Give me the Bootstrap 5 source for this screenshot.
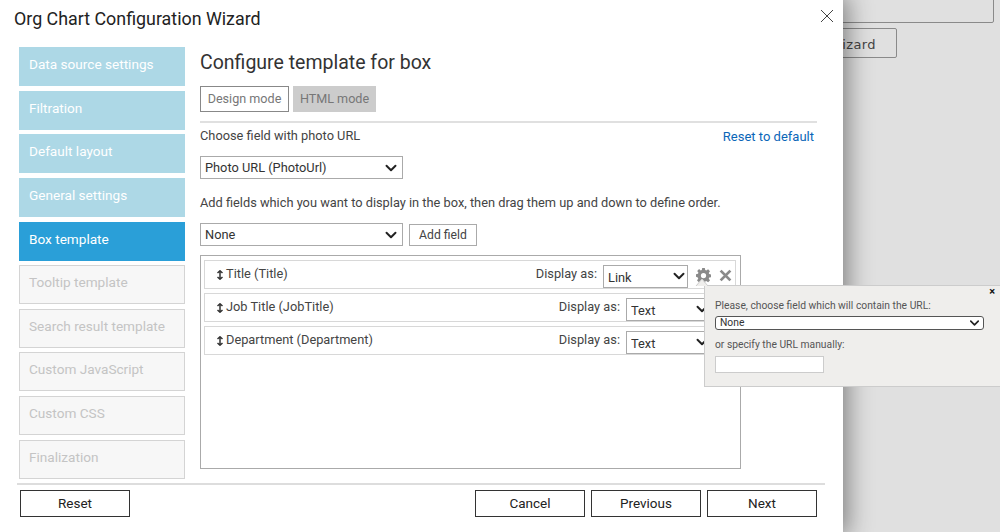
<!DOCTYPE html>
<html lang="en">
<head>
<meta charset="utf-8">
<title>Org Chart Configuration Wizard</title>
<link href="https://cdn.jsdelivr.net/npm/bootstrap@5.3.0/dist/css/bootstrap.min.css" rel="stylesheet">
<style>
html,body{height:532px;overflow:hidden}
body{background:#e0e0e0;font-family:Roboto,"Noto Sans",sans-serif;font-size:13px;color:#444}
.backdrop-page{position:absolute;inset:0}
.back-input{position:absolute;left:700px;top:-10px;width:294px;height:33px;border:1px solid #8a8a8a;border-radius:2px}
.back-btn{position:absolute;left:760px;top:28px;width:137px;height:30px;border:1px solid #8a8a8a;border-radius:2px;text-align:right;padding:6px 20px 0 0;font-family:"DejaVu Sans",sans-serif;font-size:13px;letter-spacing:.4px;color:#444}
.wizard{position:relative;width:843px;height:532px;background:#fff;box-shadow:0 0 24px 4px rgba(0,0,0,.45)}
.wiz-title{font-size:17.85px;color:#222;padding:8px 0 0 14px;height:47px;line-height:22px}
.wiz-close{position:absolute;left:820px;top:9px;width:14px;height:14px}
.wiz-body{padding-left:19px;height:436px;gap:15px}
.steps{width:166px;flex:none}
.step{height:39px;margin-bottom:4.65px;padding:0 10px;line-height:34px;font-size:13.6px;color:#fff;background:#add8e6;white-space:nowrap}
.step.now{background:#2a9fd8}
.step.off{background:#f7f7f7;border:1px solid #d4d4d4;color:#c4c4c4;line-height:32px;padding:0 9px}
.main-col{width:617px;flex:none;position:relative}
.main-h{font-size:19.5px;font-weight:400;color:#333;margin:2px 0 0;height:37px;line-height:27px}
.mode{height:26px;font-size:12.6px;line-height:24px;padding:0;width:89px;color:#777;border:1px solid #888;background:#fff;border-radius:0}
.mode.alt{background:#ccc;border-color:#ccc;color:#777;width:83px;margin-left:4px;text-align:center}
.rule{height:2px;background:#e0e0e0;margin:9px 0 0}
.lab{font-size:12.8px;color:#444;line-height:18px}
.lab-top{margin-top:4px}
.reset-link{color:#0a66b8;text-decoration:none;font-size:13px;margin-right:3px;position:relative;top:1px}
.sel{font-family:inherit;font-size:12.8px;color:#333;height:23px;padding:0 24px 0 4px;border:1px solid #aaa;border-radius:0;line-height:21px;box-shadow:none;
background-size:16px 12px;background-position:right 3px center;
background-image:url("data:image/svg+xml,%3csvg xmlns='http://www.w3.org/2000/svg' viewBox='0 0 16 16'%3e%3cpath fill='none' stroke='%23222' stroke-linecap='round' stroke-linejoin='round' stroke-width='2.6' d='m2 5 6 6 6-6'/%3e%3c/svg%3e")}
.sel-w{width:203px}
.sel-a{margin-top:11px}
.lab-b{margin-top:15px}
.add-row{margin-top:11px}
.add-btn{height:22px;width:68px;font-size:12.2px;line-height:20px;padding:0;color:#444;border:1px solid #aaa;border-radius:0;background:#fff;margin-left:6px;margin-top:1px}
.field-box{width:541px;height:214px;border:1px solid #aaa;padding:4px 4px 0 3px;margin-top:9px}
.field-row{height:29px;border:1px solid #d8d8d8;margin-bottom:4px;padding:0 24px 2px 9px;font-size:12.8px;color:#444}
.field-row.first{padding-right:3px}
.grip{width:12px;flex:none;margin-top:3px}
.field-row .sel{width:85px;height:23px;color:#333;margin:5px 0 0 6px;background-position:right 0 center;padding-top:1px}
.gear-x{margin:4px 0 0 8px;gap:8px;flex:none}
.wiz-foot{border-top:2px solid #ddd;margin:0 18px 0 17px;padding:5px 8px 0 3px;height:48px}
.foot-btn{width:110px;height:27px;padding:0;line-height:25px;font-size:13.5px;color:#222;background:#fff;border:1px solid #333;border-radius:0}
.foot-gap{margin-left:6px}
.pop{position:absolute;left:704px;top:285px;width:297px;height:102px;background:#efeeec;border:1px solid #ccc;padding:12px 10px;font-size:10.3px;color:#555;z-index:5}
.pop-x{position:absolute;right:5px;top:-1px;font-size:11px;font-weight:700;color:#111;line-height:14px}
.pop .sel{display:block;width:269px;height:14px;font-size:10.3px;line-height:12px;border:1px solid #555;border-radius:3px;background-size:13px 10px;padding:0 16px 0 4px;margin:3px 0 7px;background-position:right 2px center;color:#333}
.pop-in{display:block;width:109px;height:17px;background:#fff;border:1px solid #ccc;margin-top:3px}
.pop-arrow{position:absolute;left:694px;top:278px;z-index:6;width:16px;height:8px}
</style>
</head>
<body>
<div class="backdrop-page" aria-hidden="true">
  <div class="back-input"></div>
  <div class="back-btn">Wizard</div>
</div>
<div class="wizard">
  <div class="wiz-title">Org Chart Configuration Wizard</div>
  <svg class="wiz-close" viewBox="0 0 14 14"><path d="M1 1l12 12M13 1L1 13" fill="none" stroke="#444" stroke-width="1"/></svg>
  <div class="d-flex wiz-body">
    <div class="steps">
      <div class="step">Data source settings</div>
      <div class="step">Filtration</div>
      <div class="step">Default layout</div>
      <div class="step">General settings</div>
      <div class="step now">Box template</div>
      <div class="step off">Tooltip template</div>
      <div class="step off">Search result template</div>
      <div class="step off">Custom JavaScript</div>
      <div class="step off">Custom CSS</div>
      <div class="step off">Finalization</div>
    </div>
    <div class="main-col">
      <h1 class="main-h">Configure template for box</h1>
      <div class="d-flex">
        <button class="btn mode" type="button">Design mode</button>
        <button class="btn mode alt" type="button">HTML mode</button>
      </div>
      <div class="rule"></div>
      <div class="d-flex justify-content-between lab lab-top">
        <span>Choose field with photo URL</span>
        <a class="reset-link" href="#">Reset to default</a>
      </div>
      <select class="form-select sel sel-w sel-a"><option>Photo URL (PhotoUrl)</option></select>
      <div class="lab lab-b">Add fields which you want to display in the box, then drag them up and down to define order.</div>
      <div class="d-flex add-row">
        <select class="form-select sel sel-w"><option>None</option></select>
        <button class="btn add-btn" type="button">Add field</button>
      </div>
      <div class="field-box">
        <div class="field-row first d-flex align-items-center">
          <svg class="grip" width="7" height="10" viewBox="0 0 8 10"><path d="M4 1v8M1.500 3 4 .8 6.500 3M1.500 7 4 9.200 6.500 7" fill="none" stroke="#333" stroke-width="1.500"/></svg><span>Title (Title)</span>
          <span class="ms-auto">Display as:</span>
          <select class="form-select sel"><option>Link</option></select>
          <span class="d-flex align-items-center gear-x">
            <svg width="15" height="15" viewBox="0 0 16 16"><path fill="#8a8a8a" fill-rule="evenodd" d="M6.600 0h2.800l.4 2.200 1.200.5L12.900 1.400l2 2-1.300 1.900.5 1.200 2.200.4v2.800l-2.200.4-.5 1.200 1.300 1.900-2 2-1.900-1.300-1.200.5-.4 2.200H6.600l-.4-2.200-1.200-.5-1.900 1.300-2-2 1.300-1.900-.5-1.200L-.1 9.400V6.600l2.200-.4.5-1.200L1.300 3.100l2-2L5 2.700l1.200-.5zM8 5.200a2.800 2.800 0 1 0 0 5.600 2.800 2.800 0 0 0 0-5.600z"/></svg>
            <svg width="13" height="13" viewBox="0 0 12 12"><path d="M1.500 1.500l9 9M10.500 1.500l-9 9" stroke="#8a8a8a" stroke-width="2.600" fill="none"/></svg>
          </span>
        </div>
        <div class="field-row d-flex align-items-center">
          <svg class="grip" width="7" height="10" viewBox="0 0 8 10"><path d="M4 1v8M1.500 3 4 .8 6.500 3M1.500 7 4 9.200 6.500 7" fill="none" stroke="#333" stroke-width="1.500"/></svg><span>Job Title (JobTitle)</span>
          <span class="ms-auto">Display as:</span>
          <select class="form-select sel"><option>Text</option></select>
        </div>
        <div class="field-row d-flex align-items-center">
          <svg class="grip" width="7" height="10" viewBox="0 0 8 10"><path d="M4 1v8M1.500 3 4 .8 6.500 3M1.500 7 4 9.200 6.500 7" fill="none" stroke="#333" stroke-width="1.500"/></svg><span>Department (Department)</span>
          <span class="ms-auto">Display as:</span>
          <select class="form-select sel"><option>Text</option></select>
        </div>
      </div>
    </div>
  </div>
  <div class="wiz-foot d-flex">
    <button class="btn foot-btn" type="button">Reset</button>
    <div class="ms-auto d-flex">
      <button class="btn foot-btn" type="button">Cancel</button>
      <button class="btn foot-btn foot-gap" type="button">Previous</button>
      <button class="btn foot-btn foot-gap" type="button">Next</button>
    </div>
  </div>
</div>
<svg class="pop-arrow" viewBox="0 0 16 8"><path d="M2 8 8 1l6 7z" fill="#efeeec"/><path d="M2 8 8 1l6 7" fill="none" stroke="#ccc"/></svg>
<div class="pop">
  <span class="pop-x">×</span>
  <div>Please, choose field which will contain the URL:</div>
  <select class="form-select sel"><option>None</option></select>
  <div>or specify the URL manually:</div>
  <div class="pop-in"></div>
</div>
</body>
</html>
